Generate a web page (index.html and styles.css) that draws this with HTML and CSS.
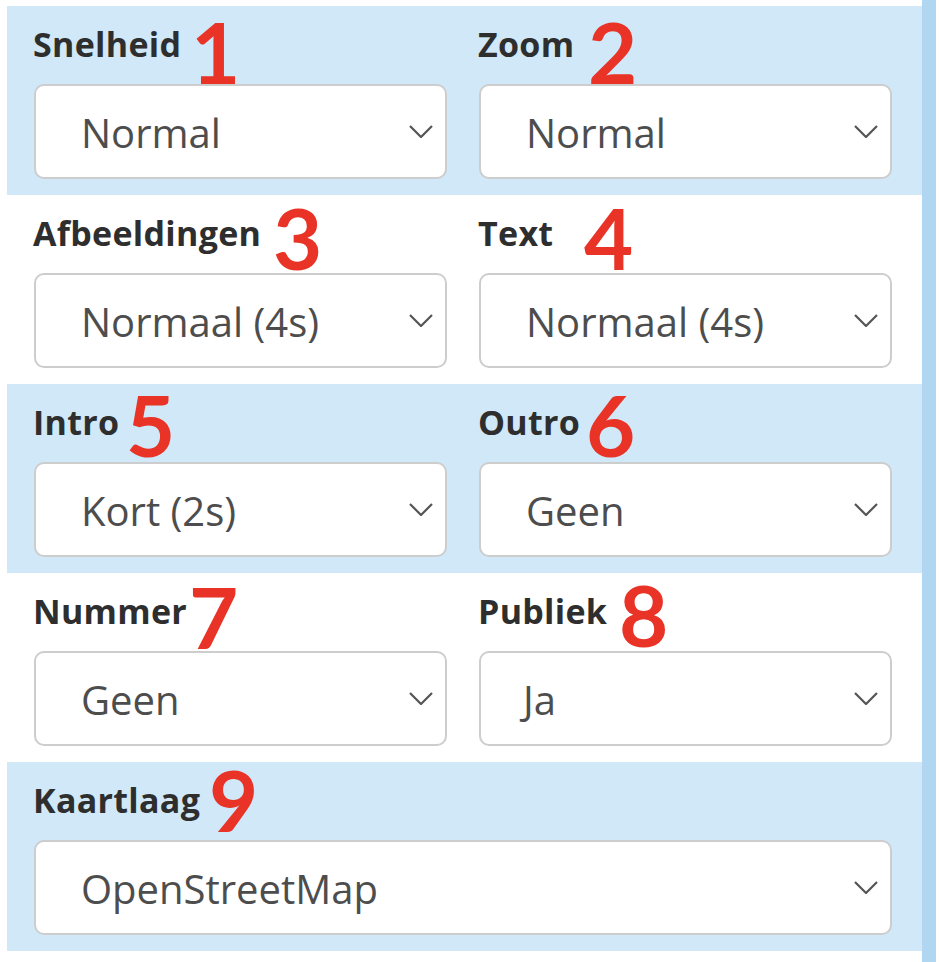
FILE: index.html
```html
<!DOCTYPE html>
<html lang="nl">
<head>
<meta charset="utf-8">
<title>Instellingen</title>
<link rel="stylesheet" href="styles.css">
</head>
<body>
<div class="page">
  <div class="panel">
    <div class="section tinted">
      <div class="field">
        <div class="label">Snelheid</div>
        <span class="badge b1">1</span>
        <div class="select"><span class="value">Normal</span><svg class="chev" viewBox="0 0 24 13"><path d="M1 1 L12 12 L23 1"/></svg></div>
      </div>
      <div class="field">
        <div class="label">Zoom</div>
        <span class="badge b2">2</span>
        <div class="select"><span class="value">Normal</span><svg class="chev" viewBox="0 0 24 13"><path d="M1 1 L12 12 L23 1"/></svg></div>
      </div>
    </div>
    <div class="section">
      <div class="field">
        <div class="label">Afbeeldingen</div>
        <span class="badge b3">3</span>
        <div class="select"><span class="value">Normaal (4s)</span><svg class="chev" viewBox="0 0 24 13"><path d="M1 1 L12 12 L23 1"/></svg></div>
      </div>
      <div class="field">
        <div class="label">Text</div>
        <span class="badge b4">4</span>
        <div class="select"><span class="value">Normaal (4s)</span><svg class="chev" viewBox="0 0 24 13"><path d="M1 1 L12 12 L23 1"/></svg></div>
      </div>
    </div>
    <div class="section tinted">
      <div class="field">
        <div class="label">Intro</div>
        <span class="badge b5">5</span>
        <div class="select"><span class="value">Kort (2s)</span><svg class="chev" viewBox="0 0 24 13"><path d="M1 1 L12 12 L23 1"/></svg></div>
      </div>
      <div class="field">
        <div class="label">Outro</div>
        <span class="badge b6">6</span>
        <div class="select"><span class="value">Geen</span><svg class="chev" viewBox="0 0 24 13"><path d="M1 1 L12 12 L23 1"/></svg></div>
      </div>
    </div>
    <div class="section">
      <div class="field">
        <div class="label">Nummer</div>
        <span class="badge b7">7</span>
        <div class="select"><span class="value">Geen</span><svg class="chev" viewBox="0 0 24 13"><path d="M1 1 L12 12 L23 1"/></svg></div>
      </div>
      <div class="field">
        <div class="label">Publiek</div>
        <span class="badge b8">8</span>
        <div class="select"><span class="value value-ja">Ja</span><svg class="chev" viewBox="0 0 24 13"><path d="M1 1 L12 12 L23 1"/></svg></div>
      </div>
    </div>
    <div class="section tinted single">
      <div class="field">
        <div class="label">Kaartlaag</div>
        <span class="badge b9">9</span>
        <div class="select"><span class="value">OpenStreetMap</span><svg class="chev" viewBox="0 0 24 13"><path d="M1 1 L12 12 L23 1"/></svg></div>
      </div>
    </div>
  </div>
  <div class="scrollbar"></div>
</div>
</body>
</html>
```

FILE: styles.css
```css
html, body {
  margin: 0;
  padding: 0;
  background: #ffffff;
}

body {
  font-family: "Open Sans", "Noto Sans", sans-serif;
  color: #333333;
}

.page {
  display: flex;
  align-items: stretch;
  height: 962px;
  overflow: hidden;
}

.panel {
  width: 915px;
  margin-left: 7px;
  padding-top: 6px;
  display: flex;
  flex-direction: column;
}

.scrollbar {
  width: 14px;
  background: #b0d6f1;
}

.section {
  display: grid;
  grid-template-columns: 1fr 1fr;
  column-gap: 32px;
  padding: 18px 30px 16px 27px;
  background: #ffffff;
}

.section.tinted {
  background: #d0e8f7;
}

.section.single {
  grid-template-columns: 1fr;
}

.field {
  position: relative;
}

.label {
  font-size: 34px;
  font-weight: 700;
  line-height: 40px;
  letter-spacing: 0.3px;
  color: #2e2e2e;
  margin-bottom: 20px;
  margin-left: -1px;
  white-space: nowrap;
}

.select {
  box-sizing: border-box;
  height: 95px;
  border: 2px solid #cdcdcd;
  border-radius: 10px;
  background: #ffffff;
  display: flex;
  align-items: center;
  justify-content: space-between;
  padding: 2px 12px 0 45px;
}

.value {
  font-size: 40px;
  color: #4d4d4d;
  white-space: nowrap;
}

.value-ja {
  margin-left: -3px;
}

.chev {
  width: 24px;
  height: 13px;
  fill: none;
  stroke: #555555;
  stroke-width: 2.2;
  margin-top: -2px;
}

.badge {
  position: absolute;
  font-family: "Lato", "DejaVu Sans", sans-serif;
  font-weight: 700;
  font-size: 85px;
  line-height: 68px;
  color: #e83326;
}

.b1 { left: 157px; top: -7px; }
.b2 { left: 109px; top: -7px; }
.b3 { left: 239px; top: -10px; }
.b4 { left: 105px; top: -10px; }
.b5 { left: 92px; top: -12px; }
.b6 { left: 107px; top: -12px; }
.b7 { left: 155px; top: -9px; }
.b8 { left: 140px; top: -11px; }
.b9 { left: 175px; top: -15px; }
```
